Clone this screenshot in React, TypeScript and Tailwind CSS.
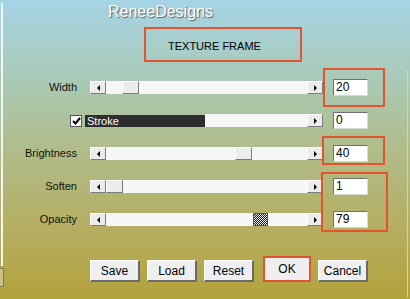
import React from 'react';

const ArrowBtn = ({ dir }: { dir: 'left' | 'right' }) => (
    <div className="w-[16px] h-[13px] shrink-0 bg-[#ececec] border-t border-l border-t-white border-l-white border-b border-r border-b-[#7a7a7a] border-r-[#7a7a7a] flex items-center justify-center">
        {dir === 'left' ? (
            <div className="w-0 h-0 border-y-[3px] border-y-transparent border-r-[3px] border-r-black" />
        ) : (
            <div className="w-0 h-0 border-y-[3px] border-y-transparent border-l-[3px] border-l-black" />
        )}
    </div>
);

const ValueBox = ({ value }: { value: string }) => (
    <div className="ml-[10px] w-[35px] h-[17px] bg-white border-t border-l border-t-[#6f6f6f] border-l-[#6f6f6f] border-b border-r border-b-[#d8d8d8] border-r-[#d8d8d8] text-[12px] leading-[15px] pl-[2px] text-black">
        {value}
    </div>
);

const SliderRow = ({ label, value, thumb, checkered }: { label: string, value: string, thumb: number, checkered?: boolean }) => (
    <div className="flex items-center h-[33px]">
        <div className="w-[77px] text-right text-[11px] text-[#111]">{label}</div>
        <div className="ml-[13px] flex w-[233px] h-[13px] bg-[#f6f6f6]">
            <ArrowBtn dir="left" />
            <div className="flex-1 flex">
                {checkered ? (
                    <div
                        className="w-[15px] h-[13px] border border-[#555] bg-[repeating-conic-gradient(#1a1a1a_0_25%,#f0f0f0_0_50%)] bg-[length:2px_2px]"
                        style={{ marginLeft: thumb }}
                    />
                ) : (
                    <div
                        className="w-[17px] h-[13px] bg-[#ececec] border-t border-l border-t-white border-l-white border-b border-r border-b-[#7a7a7a] border-r-[#7a7a7a]"
                        style={{ marginLeft: thumb }}
                    />
                )}
            </div>
            <ArrowBtn dir="right" />
        </div>
        <ValueBox value={value} />
    </div>
);

const Btn = ({ label, className = '' }: { label: string, className?: string }) => (
    <div className={`h-[22px] w-[50px] bg-[#efefef] border-t border-l border-t-white border-l-white border-b-2 border-r-2 border-b-[#6a6a6a] border-r-[#6a6a6a] flex items-center justify-center text-[12px] text-black ${className}`}>
        {label}
    </div>
);

export default function App() {
    return (
        <div className="relative w-[410px] h-[299px] overflow-hidden bg-[linear-gradient(to_bottom,#a6d4e6_0%,#a9cab9_25%,#b0bc8a_50%,#b5ae62_76%,#b3a23b_100%)] font-['Liberation_Sans',Arial,sans-serif]">
            {/* left edge of the window behind */}
            <div className="absolute left-[1px] top-[3px] w-[2px] h-[263px] bg-[#f4f4f4]" />
            <div className="absolute left-0 top-[268px] w-[4px] h-[19px] border border-[#777] border-l-0 bg-[#c9c08a]" />
            <div className="absolute right-[2px] top-[70px] w-[1px] h-[227px] bg-[#d8d2a8]" />

            <div className="flex flex-col">
                <div className="h-[27px] pt-[3px] pl-[108px] text-[16px] leading-[18px] text-white [text-shadow:1px_1px_1px_#5a5a5a]">
                    ReneeDesigns
                </div>
                <div className="ml-[144px] w-[158px] h-[35px] border-2 border-[#e4532f] flex items-center pl-[22px] pt-[4px] text-[11px] text-black">
                    TEXTURE FRAME
                </div>

                <div className="mt-[9px] flex flex-col">
                    <SliderRow label="Width" value="20" thumb={16} />
                    <div className="flex items-center h-[33px]">
                        <div className="ml-[70px] w-[12px] h-[12px] bg-white border border-[#555] flex items-center justify-center">
                            <svg width="9" height="8" viewBox="0 0 9 8">
                                <path d="M1 4 L3.5 6.5 L8 1" fill="none" stroke="#000" strokeWidth="2" />
                            </svg>
                        </div>
                        <div className="ml-[3px] w-[120px] h-[12px] bg-[#2d2d2d] text-white text-[11px] leading-[12px] pl-[2px]">Stroke</div>
                        <div className="w-[102px] h-[13px] bg-[#f6f6f6]" />
                        <ArrowBtn dir="right" />
                        <ValueBox value="0" />
                    </div>
                    <SliderRow label="Brightness" value="40" thumb={129} />
                    <SliderRow label="Soften" value="1" thumb={0} />
                    <SliderRow label="Opacity" value="79" thumb={147} checkered />
                </div>

                <div className="mt-[20px] ml-[90px] flex items-end gap-[7px] h-[26px]">
                    <Btn label="Save" />
                    <Btn label="Load" />
                    <Btn label="Reset" />
                    <div className="ml-[2px] w-[48px] h-[26px] border-2 border-[#e4532f] bg-[#efefef] flex items-center justify-center text-[12px] text-black">
                        OK
                    </div>
                    <Btn label="Cancel" />
                </div>
            </div>

            {/* red annotation frames */}
            <div className="absolute left-[323px] top-[68px] w-[62px] h-[39px] border-2 border-[#e4532f]" />
            <div className="absolute left-[322px] top-[136px] w-[63px] h-[29px] border-2 border-[#e4532f]" />
            <div className="absolute left-[321px] top-[172px] w-[67px] h-[60px] border-2 border-[#e4532f]" />
        </div>
    );
}
